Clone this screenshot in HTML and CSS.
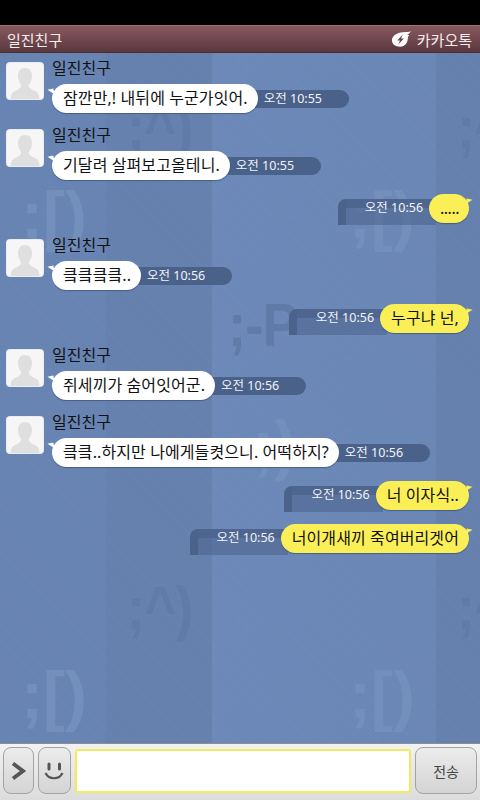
FILE: index.html
```html
<!DOCTYPE html>
<html lang="ko">
<head>
  <meta charset="UTF-8">
  <title>일진친구</title>
  <link rel="stylesheet" href="styles.css">
</head>
<body>
  <div class="app">
    <div class="status"></div>

    <div class="header">
      <span class="title">일진친구</span>
      <span class="brand">
        <svg class="brand-icon" width="21" height="18" viewBox="0 0 22 18">
          <path d="M21 1 C19 2 16 1.500 12.500 2 C6 2.500 1 6 1 10.500 C1 14.500 5 17 9.500 17 C14.500 17 17.500 13 17.500 9 C17.500 7.500 18 6 19 4.500 C17.800 4.800 17.200 4.800 17 4.600 C18.500 4 20 2.500 21 1 Z" fill="#fff"/>
          <path d="M12.500 4 L6.500 10.500 L9.500 10.500 L7.500 15 L13.500 8.500 L10.500 8.500 Z" fill="#6d464d"/>
        </svg>
        카카오톡
      </span>
    </div>

    <div class="chat">
      <!-- 배경 이모티콘 -->
      <div class="wall">
        <span class="emo emo-dark e1">;^)</span>
        <span class="emo emo-dark e2">;^)</span>
        <span class="emo emo-dark e3">;^</span>
        <span class="emo emo-dark e4">;^</span>
        <span class="emo emo-dark e5">;-P</span>
        <span class="emo emo-light e6">;[)</span>
        <span class="emo emo-light e7">;[)</span>
        <span class="emo emo-light e8">;[)</span>
        <span class="emo emo-light e9">;[)</span>
        <span class="emo emo-light e10">;)</span>
      </div>

      <div class="messages">
        <div class="msg">
          <svg class="avatar" viewBox="0 0 38 38"><use href="#person"/></svg>
          <div class="msg-body">
            <div class="name">일진친구</div>
            <div class="line">
              <div class="bubble">잠깐만,! 내뒤에 누군가잇어.</div>
              <div class="time">오전 10:55</div>
            </div>
          </div>
        </div>

        <div class="msg">
          <svg class="avatar" viewBox="0 0 38 38"><use href="#person"/></svg>
          <div class="msg-body">
            <div class="name">일진친구</div>
            <div class="line">
              <div class="bubble">기달려 살펴보고올테니.</div>
              <div class="time">오전 10:55</div>
            </div>
          </div>
        </div>

        <div class="me">
          <div class="time-me">오전 10:56</div>
          <div class="bubble-me dots">.....</div>
        </div>

        <div class="msg">
          <svg class="avatar" viewBox="0 0 38 38"><use href="#person"/></svg>
          <div class="msg-body">
            <div class="name">일진친구</div>
            <div class="line">
              <div class="bubble">킄킄킄킄..</div>
              <div class="time">오전 10:56</div>
            </div>
          </div>
        </div>

        <div class="me">
          <div class="time-me">오전 10:56</div>
          <div class="bubble-me">누구냐 넌,</div>
        </div>

        <div class="msg">
          <svg class="avatar" viewBox="0 0 38 38"><use href="#person"/></svg>
          <div class="msg-body">
            <div class="name">일진친구</div>
            <div class="line">
              <div class="bubble">쥐세끼가 숨어잇어군.</div>
              <div class="time">오전 10:56</div>
            </div>
          </div>
        </div>

        <div class="msg">
          <svg class="avatar" viewBox="0 0 38 38"><use href="#person"/></svg>
          <div class="msg-body">
            <div class="name">일진친구</div>
            <div class="line">
              <div class="bubble">킄킄..하지만 나에게들켯으니. 어떡하지?</div>
              <div class="time">오전 10:56</div>
            </div>
          </div>
        </div>

        <div class="me">
          <div class="time-me">오전 10:56</div>
          <div class="bubble-me">너 이자식..</div>
        </div>

        <div class="me">
          <div class="time-me">오전 10:56</div>
          <div class="bubble-me">너이개새끼 죽여버리겟어</div>
        </div>
      </div>
    </div>

    <div class="bar">
      <div class="btn btn-more">
        <svg width="17" height="20" viewBox="0 0 17 20"><path d="M3 2.500 L13 10 L3 17.500" fill="none" stroke="#555" stroke-width="3.800"/></svg>
      </div>
      <div class="btn btn-emo">
        <svg width="20" height="22" viewBox="0 0 20 22">
          <rect x="3.500" y="2.500" width="3" height="8" rx="1.500" fill="#555"/>
          <rect x="14" y="2.500" width="3" height="8" rx="1.500" fill="#555"/>
          <path d="M1.500 13 C5 20 15 20 18.500 13" fill="none" stroke="#555" stroke-width="2.200"/>
        </svg>
      </div>
      <input class="entry" type="text">
      <div class="btn btn-send">전송</div>
    </div>
  </div>

  <svg class="defs" width="0" height="0">
    <symbol id="person" viewBox="0 0 38 38">
      <rect x="0.500" y="0.500" width="37" height="37" rx="3" fill="#f6f6f6" stroke="#e8edf5"/>
      <path d="M19 6 C23.500 6 26 9.500 26 14 C26 18 24.500 21 22.800 23 C22.800 26 25 27.500 29 29 C31.500 30 33 32 33.500 37 L4.500 37 C5 32 6.500 30 9 29 C13 27.500 15.200 26 15.200 23 C13.500 21 12 18 12 14 C12 9.500 14.500 6 19 6 Z" fill="#dfdfdf"/>
    </symbol>
  </svg>
</body>
</html>
```

FILE: styles.css
```css
* {
  box-sizing: border-box;
}
html, body {
  margin: 0;
  height: 100%;
}
body {
  font-family: "Noto Sans", "Noto Sans CJK KR", sans-serif;
  background-color: #000;
}
.app {
  width: 480px;
  height: 800px;
  display: flex;
  flex-direction: column;
  overflow: hidden;
}
.defs {
  position: absolute;
}
.status {
  height: 25px;
  background-color: #000;
}

/* 상단 타이틀 */
.header {
  height: 28px;
  padding: 0 8px 0 7px;
  display: flex;
  align-items: center;
  justify-content: space-between;
  color: #f4eeee;
  font-size: 15px;
  background: linear-gradient(#88595f, #5a383e);
  border-top: 1px solid #9a7479;
  border-bottom: 1px solid #4b2e33;
}
.brand {
  display: flex;
  align-items: center;
  gap: 5px;
  font-size: 15px;
}

/* 대화 영역 */
.chat {
  flex: 1;
  position: relative;
  overflow: hidden;
  background-color: #6a86b6;
  background-image:
    repeating-linear-gradient(45deg, rgba(255, 255, 255, 0.025) 0, rgba(255, 255, 255, 0.025) 1px, transparent 1px, transparent 3px),
    linear-gradient(90deg,
      #6783b2 0, #6783b2 106px,
      #6580ad 106px, #6580ad 212px,
      #6c88b8 212px, #6a86b5 436px,
      #6580ad 436px);
}
.wall {
  position: absolute;
  inset: 0;
}
.emo {
  position: absolute;
  font-family: "Liberation Sans", sans-serif;
  font-weight: bold;
  white-space: nowrap;
  transform-origin: left top;
}
.emo-dark {
  color: #607ba8;
  font-size: 62px;
  line-height: 62px;
  letter-spacing: -1px;
  transform: scaleX(0.88);
}
.emo-light {
  color: #7390bc;
  font-size: 66px;
  line-height: 66px;
}
.e1 { left: 127px; top: 44px; }
.e2 { left: 127px; top: 524px; }
.e3 { left: 457px; top: 44px; }
.e4 { left: 457px; top: 524px; }
.e5 { left: 228px; top: 241px; }
.e6 { left: 21px; top: 129px; }
.e7 { left: 349px; top: 129px; }
.e8 { left: 21px; top: 609px; }
.e9 { left: 349px; top: 609px; }
.e10 { left: 252px; top: 358px; }

.messages {
  position: relative;
  padding: 9px 0 0 6px;
  display: flex;
  flex-direction: column;
}
.msg {
  display: flex;
  margin-bottom: 16px;
}
.avatar {
  width: 38px;
  height: 38px;
  flex: none;
  margin-right: 8px;
}
.msg-body {
  margin-top: -2px;
}
.name {
  height: 24px;
  font-size: 16px;
  line-height: 17px;
  color: #111;
}
.line {
  display: flex;
  align-items: center;
}
.bubble, .bubble-me {
  position: relative;
  z-index: 1;
  height: 29px;
  padding: 0 10px 0 11px;
  border-radius: 14.500px;
  font-size: 16px;
  letter-spacing: 0.1px;
  line-height: 28px;
  color: #111;
  white-space: nowrap;
  box-shadow: 0 1px 1px rgba(50, 70, 110, 0.6);
}
.bubble {
  background-color: #fff;
}
.bubble::before {
  content: "";
  position: absolute;
  left: -4px;
  top: 5px;
  border-top: 6px solid #fff;
  border-left: 6px solid transparent;
  transform: rotate(-12deg);
}
.time {
  margin-left: -6px;
  height: 18px;
  padding: 0 27px 0 12px;
  border-radius: 0 9px 9px 0;
  background-color: #4a618a;
  color: #f2f4f8;
  font-size: 12.500px;
  line-height: 18px;
  white-space: nowrap;
}

/* 내가 보낸 메시지 */
.me {
  display: flex;
  align-items: flex-start;
  justify-content: flex-end;
  padding-right: 11px;
  margin: -2px 0 14px;
}
.bubble-me {
  background-color: #fbef57;
}
.bubble-me.dots {
  letter-spacing: -0.500px;
}
.bubble-me::after {
  content: "";
  position: absolute;
  right: -3px;
  top: 5px;
  border-top: 6px solid #fbef57;
  border-right: 6px solid transparent;
  transform: rotate(12deg);
}
.time-me {
  margin: 5px -7px 0 0;
  height: 26px;
  padding: 0 13px 8px 27px;
  border-radius: 8px 0 0 0;
  color: #f2f4f8;
  font-size: 12.500px;
  line-height: 18px;
  white-space: nowrap;
  background:
    linear-gradient(#4b628b, #4b628b) left top / 8px 100% no-repeat,
    linear-gradient(rgba(74, 97, 138, 0.75), rgba(74, 97, 138, 0.75)) left top / 100% 9px no-repeat,
    rgba(74, 97, 138, 0.55);
}

/* 하단 입력 */
.bar {
  height: 57px;
  padding: 3px 3px 6px;
  display: flex;
  align-items: stretch;
  background: linear-gradient(#f2f2f2, #dcdcdc);
  border-top: 1px solid #8d8d8d;
}
.btn {
  display: flex;
  align-items: center;
  justify-content: center;
  border: 1px solid #a3a3a3;
  border-radius: 8px;
  background: linear-gradient(#ececec, #d4d4d4);
}
.btn-more {
  width: 31px;
}
.btn-emo {
  width: 33px;
  margin-left: 4px;
}
.btn-send {
  width: 62px;
  margin-left: 4px;
  color: #444;
  font-size: 14px;
}
.entry {
  width: 337px;
  margin: 2px 0 1px 4px;
  border: 2px solid #efed5c;
  border-radius: 3px;
  background-color: #fff;
  outline: none;
}
```
